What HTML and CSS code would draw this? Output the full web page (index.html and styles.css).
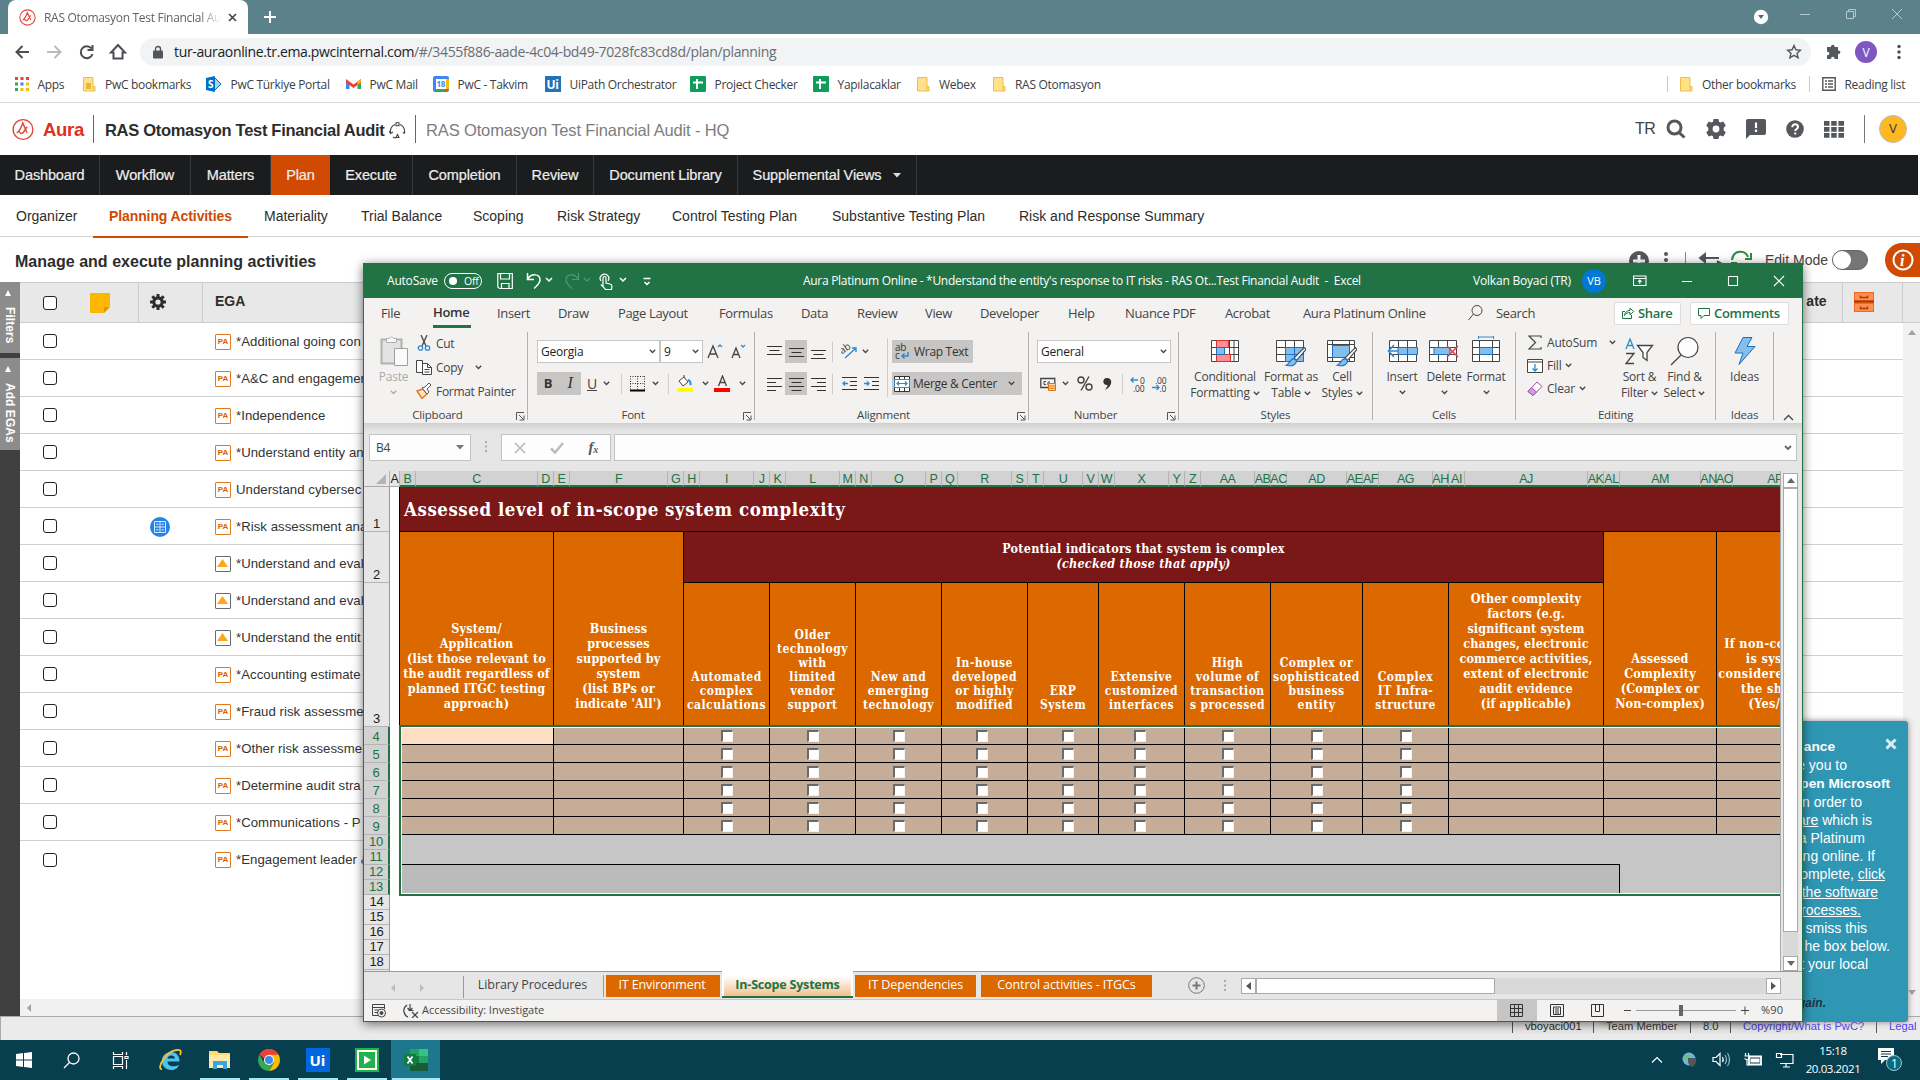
FILE: index.html
```html
<!DOCTYPE html>
<html lang="en">
<head>
<meta charset="utf-8">
<title>RAS Otomasyon Test Financial Audit</title>
<link rel="stylesheet" href="styles.css">
</head>
<body>
<svg class="defs" width="0" height="0">
  <symbol id="cv" viewBox="0 0 7 5"><path d="M.8 .8 3.5 3.5 6.2 .8" fill="none" stroke="currentColor" stroke-width="1.3"/></symbol>
  <symbol id="folder" viewBox="0 0 13 15"><path d="M.5.5h9.500v9h2v4.500H.500z" fill="#ffe18a" stroke="#e9c04b"/><path d="M10 9.500v4.500" stroke="#e9c04b"/></symbol>
  <symbol id="aura" viewBox="0 0 24 24"><circle cx="12" cy="12" r="10.800" fill="none" stroke="#e0493d" stroke-width="1.500"/><path d="M5 15.500C8 15 10 10 11.800 5l4.600 10.500M7.500 13.500c1 3.500 3.500 3.500 5 1.500l4-6" fill="none" stroke="#e0493d" stroke-width="1.600"/></symbol>
  <symbol id="sheet" viewBox="0 0 16 16"><rect width="16" height="16" rx="1" fill="#0f9d58"/><path d="M3 6.500h10M7 3v10" stroke="#fff" stroke-width="2"/></symbol>
  <symbol id="gear" viewBox="0 0 24 24"><path fill="currentColor" fill-rule="evenodd" d="M9.300 1h5.400l.6 3 1.500.9L20 3.900l2.700 4.600-2.300 2v3l2.300 2L20 20.100l-3.200-1-1.500.9-.6 3H9.300l-.6-3-1.500-.9-3.200 1-2.700-4.600 2.300-2v-3l-2.300-2L4 3.900l3.200 1 1.500-.9zM12 8.300a3.700 3.700 0 1 0 0 7.400 3.700 3.700 0 0 0 0-7.400z"/></symbol>
  <symbol id="cog" viewBox="0 0 16 16"><path d="M8 0v16M0 8h16M2.300 2.300l11.400 11.400M13.700 2.300L2.300 13.700" stroke="currentColor" stroke-width="3"/><circle cx="8" cy="8" r="4.200" fill="#e8e8e8" stroke="currentColor" stroke-width="3.200"/></symbol>
  <symbol id="launch" viewBox="0 0 9 9"><path d="M.5 8V.5H8M3 3l4.500 4.500M8 3.500V8H3.500" fill="none" stroke="#555"/></symbol>
  <symbol id="brush" viewBox="0 0 20 20"><path d="M18.500 1.500 20 3 11.500 13l-2.500-2z" fill="#fff" stroke="#444"/><path d="M8.500 11.500c2 .3 3 1.500 2.500 3.500-1.500 3-5 3.500-9 2.500 3-1 3-5 6.500-6z" fill="#83beec" stroke="#1e6fbf"/></symbol>
  <symbol id="al-c" viewBox="0 0 15 14"><path d="M0 1.500h15M2.500 5.500h10M0 9.500h15M2.500 13.500h10" stroke="#333"/></symbol>
</svg>

<div class="browser">
  <header class="tabstrip">
    <div class="tab"><svg width="17" height="17"><use href="#aura"/></svg><span>RAS Otomasyon Test Financial Au</span><svg width="9" height="9"><path d="M1 1l7 7M8 1l-7 7" stroke="#444" stroke-width="1.600"/></svg></div>
    <svg class="newtab" width="12" height="12"><path d="M6 0v12M0 6h12" stroke="#fff" stroke-width="2"/></svg>
    <svg class="winctl" width="160" height="20"><circle cx="8" cy="10" r="7.200" fill="#fff"/><path d="M5 8h6l-3 4z" fill="#49727b"/><g stroke="#b5c8cc" fill="none"><path d="M47 7.500h10M139 2l10 10M149 2l-10 10"/><path d="M93.500 4.500h7v7h-7zM95.500 4V2.500h7v7H101"/></g></svg>
  </header>
  <div class="toolbar">
    <svg class="navicons" width="120" height="22" fill="none" stroke="#4b4e52" stroke-width="2"><path d="M14 11H1.500M7.500 5l-6 6 6 6"/><path d="M32 11h13M39.500 5l6 6-6 6" stroke="#b9bbbe"/><path d="M76.500 7.500A6 6 0 1 0 77.500 13M77.500 4v5h-5"/><path d="M98.500 17.500v-6h-2.500l7-7.500 7 7.500h-2.500v6z"/></svg>
    <div class="url"><svg width="10" height="14"><path d="M2.500 6V4a2.500 2.500 0 0 1 5 0v2" fill="none" stroke="#555" stroke-width="1.400"/><rect y="5.500" width="10" height="8" rx="1" fill="#555"/></svg><span><b>tur-auraonline.tr.ema.pwcinternal.com</b>/#/3455f886-aade-4c04-bd49-7028fc83cd8d/plan/planning</span>
      <svg class="star" width="16" height="16" viewBox="0 0 16 16"><path d="M8 1.500l1.900 4.300 4.600.4-3.500 3 1.100 4.600L8 11.300l-4.100 2.500L5 9.200l-3.500-3 4.600-.4z" fill="none" stroke="#555" stroke-width="1.400"/></svg></div>
    <svg width="16" height="16" viewBox="0 0 16 16" fill="#54585c"><path d="M6 2.500a1.800 1.800 0 0 1 3.600 0V3H13v3.500h.6a1.800 1.800 0 0 1 0 3.600H13V15H9.500v-.6a1.700 1.700 0 0 0-3.400 0v.6H2v-3.700h.6a1.800 1.800 0 0 0 0-3.600H2V3h4z"/></svg>
    <span class="ava">V</span>
    <svg width="4" height="16" fill="#4b4e52"><circle cx="2" cy="2.500" r="1.700"/><circle cx="2" cy="8" r="1.700"/><circle cx="2" cy="13.500" r="1.700"/></svg>
  </div>
  <nav class="bookmarks">
    <a><svg width="14" height="14"><g fill="#ea4335"><path d="M0 0h3v3H0zM5.500 0h3v3h-3zM11 0h3v3h-3z"/></g><path fill="#34a853" d="M0 5.500h3v3H0zM0 11h3v3H0z"/><path fill="#4285f4" d="M5.500 5.500h3v3h-3z"/><path fill="#fbbc05" d="M11 5.500h3v3h-3zM5.500 11h3v3h-3zM11 11h3v3h-3z"/></svg>Apps</a>
    <a class="f"><svg width="13" height="15"><use href="#folder"/><path d="M3 6h5v6H3z" fill="#e9b93a"/></svg>PwC bookmarks</a>
    <a><svg width="16" height="16"><path d="M8 1l7 7-7 7z" fill="#a9d0ec" stroke="#0072c6"/><path d="M0 2l9-2v16l-9-2z" fill="#0072c6"/><text x="2" y="12" font-size="10" font-weight="bold" fill="#fff" font-family="Open Sans">S</text></svg>PwC Türkiye Portal</a>
    <a><svg width="15" height="16"><path d="M0 4v9h3.500V7z" fill="#4285f4"/><path d="M15 4v9h-3.500V7z" fill="#34a853"/><path d="M0 3l7.500 5.500L15 3v3.500L7.500 12 0 6.500z" fill="#ea4335"/><path d="M11.500 6L15 3.200v3L11.500 9z" fill="#fbbc05"/></svg>PwC Mail</a>
    <a><svg width="16" height="16"><rect width="16" height="16" rx="2" fill="#4285f4"/><path d="M13 3h3v10h-3z" fill="#fbbc05"/><path d="M2 13h11v3H2z" fill="#34a853"/><path d="M13 13h3l-3 3z" fill="#ea4335"/><path d="M3 3h10v10H3z" fill="#fff"/><text x="3.500" y="11" font-size="8" font-weight="bold" fill="#4285f4" font-family="Open Sans">18</text></svg>PwC - Takvim</a>
    <a><svg width="16" height="16"><path d="M0 0h16v16H0z" fill="#2273b9"/><text x="1.500" y="12.500" font-size="12" font-weight="bold" fill="#fff" font-family="Open Sans">Ui</text></svg>UiPath Orchestrator</a>
    <a><svg width="16" height="16"><use href="#sheet"/></svg>Project Checker</a>
    <a><svg width="16" height="16"><use href="#sheet"/></svg>Yapılacaklar</a>
    <a class="f"><svg width="13" height="15"><use href="#folder"/></svg>Webex</a>
    <a class="f"><svg width="13" height="15"><use href="#folder"/></svg>RAS Otomasyon</a>
    <a class="f sep"><svg width="13" height="15"><use href="#folder"/></svg>Other bookmarks</a>
    <a class="sep"><svg width="14" height="14"><path d="M.8.8h12.400v12.400H.8zM3 4h2M6 4h5M3 7h2M6 7h5M3 10h2M6 10h5" fill="none" stroke="#555" stroke-width="1.400"/></svg>Reading list</a>
  </nav>
</div>

<div class="page">
  <header class="ahead">
    <svg width="22" height="23"><use href="#aura"/></svg><span class="brand">Aura</span>
    <b class="t1">RAS Otomasyon Test Financial Audit<svg width="17" height="17" viewBox="0 0 17 17" fill="none" stroke="#444" stroke-width="1.100"><path d="M6 2.500C2.500 4 1 7 1.500 11M11 2.500c3.500 1.500 5 4.500 4.500 8.500M4 15c1 .8 2 1 3 1M7 .800h3v3H7zM7 15.500l1.500-3 1.500 3zM0 9l1.500 2.500L4 10M14 10l1.500 2"/></svg></b>
    <span class="t2">RAS Otomasyon Test Financial Audit - HQ</span>
    <div class="tools"><span>TR</span>
      <svg width="20" height="20" fill="none" stroke="#54585c" stroke-width="3"><circle cx="8.500" cy="8.500" r="6.500"/><path d="M13 13.500l5.500 5"/></svg>
      <svg class="g" width="22" height="22"><use href="#gear"/></svg>
      <svg width="20" height="20"><path d="M2 0h16q2 0 2 2v12q0 2-2 2H4l-4 4V2q0-2 2-2z" fill="#54585c"/><path d="M10 3.500v5.500M10 10.500v2.500" stroke="#fff" stroke-width="2.200"/></svg>
      <svg width="18" height="18"><circle cx="9" cy="9" r="8.800" fill="#54585c"/><path d="M6.300 7.200C6.300 3.200 12 3.600 12 7c0 2-2.800 2-2.800 4M9.200 12.500v2" fill="none" stroke="#fff" stroke-width="2"/></svg>
      <svg width="20" height="17" fill="#54585c"><path d="M0 0h5.500v4.800H0zM7.200 0h5.500v4.800H7.200zM14.400 0H20v4.800h-5.600zM0 6h5.500v4.800H0zM7.200 6h5.500v4.800H7.200zM14.400 6H20v4.800h-5.600zM0 12h5.500v4.800H0zM7.200 12h5.500v4.800H7.200zM14.400 12H20v4.800h-5.600z"/></svg>
      <i></i><b>V</b></div>
  </header>
  <nav class="mainnav"><a>Dashboard</a><a>Workflow</a><a>Matters</a><a class="on">Plan</a><a>Execute</a><a>Completion</a><a>Review</a><a>Document Library</a><a>Supplemental Views<svg width="8" height="5"><path d="M0 0h8L4 4.500z" fill="#ddd"/></svg></a></nav>
  <nav class="subnav"><a>Organizer</a><a class="on">Planning Activities</a><a>Materiality</a><a>Trial Balance</a><a>Scoping</a><a>Risk Strategy</a><a>Control Testing Plan</a><a>Substantive Testing Plan</a><a>Risk and Response Summary</a></nav>
  <div class="heading"><b>Manage and execute planning activities</b>
    <svg class="hicons" width="104" height="22"><circle cx="10" cy="12" r="10" fill="#54585c"/><path d="M10 6v12M4 12h12" stroke="#fff" stroke-width="3"/><g fill="#54585c"><circle cx="37" cy="5" r="2"/><circle cx="37" cy="11" r="2"/></g><path d="M56.500 3v18" stroke="#888"/><path d="M73 9h17M71 9l5-4v8zM88 12l5 3-5 3" fill="#54585c" stroke="#54585c" stroke-width="2"/></svg>
    <svg class="rf" width="22" height="22"><path d="M2 11C3 1 15 0 18 8M21 4v6h-6M1 14h6" fill="none" stroke="#2c8a45" stroke-width="2"/></svg>
    <span>Edit Mode</span><i class="toggle"></i>
    <i class="info"><svg width="22" height="22"><circle cx="11" cy="11" r="9.500" fill="none" stroke="#fff" stroke-width="2"/><text x="8" y="16.500" font-size="16" font-weight="bold" font-style="italic" fill="#fff" font-family="Liberation Serif">i</text></svg></i></div>
  <div class="work">
    <aside><span class="vt v1"><i></i>Filters</span><span class="vt v2"><i></i>Add EGAs</span></aside>
    <div class="list">
      <div class="lh"><i class="ck"></i><svg class="note" width="20" height="20"><path d="M0 1q0-1 1-1h18q1 0 1 1v12l-6 7H1q-1 0-1-1z" fill="#ffb600"/><path d="M14 20v-5q0-1 1-1h5z" fill="#dd9a00"/></svg><span class="gc"><svg width="16" height="16"><use href="#cog"/></svg></span><b>EGA</b><span class="fill"></span><b class="ate">ate</b><span class="cab"><svg width="20" height="20"><path d="M0 0h20v20H0z" fill="#f26a21"/><path d="M0 9.500h20" stroke="#a63c00" stroke-width="2"/><path d="M1 1h18v7H1zM1 12h18v7H1z" fill="#ff8f50"/><path d="M6.500 3.500v2h7v-2M6.500 14.500v2h7v-2" fill="none" stroke="#a63c00" stroke-width="1.500"/></svg></span></div>
      <div class="body">
        <div class="lr"><i class="ck"></i><em>PA</em>*Additional going con</div>
        <div class="lr"><i class="ck"></i><em>PA</em>*A&amp;C and engagemen</div>
        <div class="lr"><i class="ck"></i><em>PA</em>*Independence</div>
        <div class="lr"><i class="ck"></i><em>PA</em>*Understand entity an</div>
        <div class="lr"><i class="ck"></i><em>PA</em>Understand cybersec</div>
        <div class="lr"><i class="ck"></i><svg class="calc" width="20" height="20"><circle cx="10" cy="10" r="10" fill="#2684e8"/><path d="M4.500 4.500h11v11h-11zM10 4.500v11M4.500 10h11M6 7.200h2.500M11.500 7.200H14M6 12.800h2.500M11.500 12.800H14" fill="none" stroke="#d8e9fb"/></svg><em>PA</em>*Risk assessment ana</div>
        <div class="lr"><i class="ck"></i><em class="w"></em>*Understand and eval</div>
        <div class="lr"><i class="ck"></i><em class="w"></em>*Understand and eval</div>
        <div class="lr"><i class="ck"></i><em class="w"></em>*Understand the entit</div>
        <div class="lr"><i class="ck"></i><em>PA</em>*Accounting estimate</div>
        <div class="lr"><i class="ck"></i><em>PA</em>*Fraud risk assessme</div>
        <div class="lr"><i class="ck"></i><em>PA</em>*Other risk assessme</div>
        <div class="lr"><i class="ck"></i><em>PA</em>*Determine audit stra</div>
        <div class="lr"><i class="ck"></i><em>PA</em>*Communications - P</div>
        <div class="lr last"><i class="ck"></i><em>PA</em>*Engagement leader &amp;</div>
      </div>
      <div class="hs"><svg width="6" height="8"><path d="M5 0v8L1 4z" fill="#a0a0a0"/></svg></div>
    </div>
    <div class="vs"><svg width="8" height="5"><path d="M0 5h8L4 0z" fill="#a0a0a0"/></svg><svg width="8" height="5"><path d="M0 0h8L4 5z" fill="#a0a0a0"/></svg></div>
  </div>
  <footer class="foot"><span>vboyaci001</span><span>Team Member</span><span>8.0</span><span class="l">Copyright/What is PwC?</span><span class="l">Legal</span></footer>
</div>

<div class="toast"><svg width="12" height="12"><path d="M1.500 1.500l9 9M10.500 1.500l-9 9" stroke="#d6edf4" stroke-width="3"/></svg>
<p><b>ance</b></p><p>e you to</p><p><b>pen Microsoft</b></p><p>n order to</p><p><u>are</u> which is</p><p>a Platinum</p><p>ng online. If</p><p>omplete, <u>click</u></p><p><u>the software</u></p><p><u>rocesses.</u></p><p>smiss this</p><p>he box below.</p><p>t your local</p><p class="k"><b>gain.</b></p></div>

<div class="excel">
  <div class="xtitle">
    <span class="as">AutoSave</span><span class="sw"><i></i>Off</span>
    <svg class="qa" width="160" height="22" fill="none" stroke="#fff" stroke-width="1.200"><path d="M.800 3.500h14.500v15H2.500L.800 17zM3.500 3.500v5.500h9V3.500M4.500 18.500v-5h7.500v5"/><path d="M30.500 3v6.500H37M30.500 9.500C34 3 43 3.500 43 10c0 3-2 5-6 8.500" stroke-width="1.500"/><path d="M49 8l3 3 3-3M123 8l3 3 3-3M146.500 8.500h7M147.500 12l2.500 2.500 2.500-2.500" stroke-width="1.500"/><g stroke="#4f9a70"><path d="M81.500 3v6.500H75M81.500 9.500C78 3 69 3.500 69 10c0 3 2 5 6 8.500"/><path d="M87 8l3 3 3-3"/></g><path d="M106 17v-9q0-1.500 1.500-1.500T109 8v5l4 1q2 .5 2 2.500l-.500 3h-6l-4.500-5M104 11a4.300 4.300 0 1 1 7 0"/></svg>
    <span class="name">Aura Platinum Online - *Understand the entity's response to IT risks - RAS Ot...Test Financial Audit&nbsp; -&nbsp; Excel</span>
    <span class="user">Volkan Boyaci (TR)</span><span class="vb">VB</span>
    <svg class="wc" width="152" height="14" fill="none" stroke="#fff" stroke-width="1.100"><path d="M.500 2h12.500v9.500H.500zM.500 4.500H13M6.800 10V6M5 7.800L6.800 6l1.800 1.800M49 7.500h10M95.500 2.500h9v9h-9zM141 2l10 10M151 2l-10 10"/></svg>
  </div>
  <div class="xtabs"><a>File</a><a class="on">Home</a><a>Insert</a><a>Draw</a><a>Page Layout</a><a>Formulas</a><a>Data</a><a>Review</a><a>View</a><a>Developer</a><a>Help</a><a>Nuance PDF</a><a>Acrobat</a><a>Aura Platinum Online</a><svg width="15" height="16"><circle cx="9" cy="5.500" r="5" fill="none" stroke="#444"/><path d="M5.500 9L.500 15" stroke="#444"/></svg><a>Search</a>
    <span class="bt sh"><svg width="12" height="12" fill="none" stroke="#217346"><path d="M3 4.500H.500v7h9V8M2.500 8.500C3 5 5 3.500 8 3.500V1l3.500 3.500L8 8V5.500C6 5.500 4 6 2.500 8.500z"/></svg>Share</span><span class="bt co"><svg width="12" height="12" fill="none" stroke="#217346"><path d="M.500 1.500h11v7H6l-3 3v-3H.500z"/></svg>Comments</span></div>
  <div class="ribbon">
    <section class="g1"><div class="in">
      <div class="big dis"><svg width="28" height="31"><path d="M1.500 3.500h20v24h-20z" fill="#e3e3e3" stroke="#b0b0b0" stroke-width="2"/><path d="M6.500 2.500h3Q11.500-1 13.500 2.500h3v4h-10z" fill="#fafafa" stroke="#b0b0b0"/><path d="M14.500 12.500h13v17h-13z" fill="#fafafa" stroke="#a0a0a0"/></svg><span>Paste</span><svg class="cv"><use href="#cv"/></svg></div>
      <div class="st"><div><svg width="16" height="16" fill="none" stroke="#444" stroke-width="1.300"><path d="M5 0l5 11M11 0L6 11"/><circle cx="4.500" cy="13" r="2.200" stroke="#2e8bd0"/><circle cx="11.500" cy="13" r="2.200" stroke="#2e8bd0"/></svg>Cut</div><div><svg width="16" height="16" fill="#fff" stroke="#444"><path d="M.500 1.500h6v12h-6zM6.500 4.500h5l4 4v7h-9zM11.500 4.500v4h4M8.500 10.500h5M8.500 13h5"/></svg>Copy<svg class="cv m9"><use href="#cv"/></svg></div><div><svg width="16" height="16"><path d="M1 8l6-2 4 5-5 4.500z" fill="#fde3c7" stroke="#e87a13" stroke-width="1.500"/><path d="M6 5l5 6 2-2-2-3 4-4-2-2-4 4z" fill="#fff" stroke="#555"/></svg>Format Painter</div></div>
    </div><h6>Clipboard<svg width="9" height="9"><use href="#launch"/></svg></h6></section>
    <section class="g2"><div class="in col">
      <div class="fr1"><span class="cb">Georgia<svg class="cv"><use href="#cv"/></svg></span><span class="cb">9<svg class="cv"><use href="#cv"/></svg></span><svg width="17" height="18" fill="none" stroke="#444" stroke-width="1.300"><path d="M1 15L6 3l5 12M2.800 11h6.400"/><path d="M11 4l2-2 2 2" stroke="#2e8bd0"/></svg><svg width="17" height="18" fill="none" stroke="#444" stroke-width="1.300"><path d="M1 15L5 5l4 10M2.500 11.500h5"/><path d="M10 2l2 2 2-2" stroke="#2e8bd0"/></svg></div>
      <div class="fr2"><b class="hi">B</b><i class="hi sr">I</i><u>U</u><svg class="cv"><use href="#cv"/></svg><s></s><svg width="15" height="16"><path d="M.500 0v14M7.500 0v14M14.500 0v14M0 .500h15M0 7.500h15" stroke="#333" stroke-dasharray="1 1.500"/><path d="M0 14.500h15" stroke="#000" stroke-width="2"/></svg><svg class="cv"><use href="#cv"/></svg><s></s><svg width="17" height="17"><path d="M3 6l5-4 4 5-5 4zM8 2V0" fill="#fff" stroke="#444"/><path d="M12 5q3 1 2.500 5" fill="none" stroke="#2e8bd0" stroke-width="2"/><path d="M1 13h16v4H1z" fill="#ff0"/></svg><svg class="cv"><use href="#cv"/></svg><svg width="17" height="17"><path d="M4.500 11L8.500 1l4 10M6 7.500h5" fill="none" stroke="#444" stroke-width="1.300"/><path d="M0 13h16v4H0z" fill="red"/></svg><svg class="cv"><use href="#cv"/></svg></div>
    </div><h6>Font<svg width="9" height="9"><use href="#launch"/></svg></h6></section>
    <section class="g3"><div class="in">
      <div class="al">
        <span><svg width="15" height="14"><path d="M0 1.500h15M2.500 5.500h10M0 9.500h15" stroke="#333"/></svg></span><span class="hi"><svg width="15" height="14"><path d="M0 3.500h15M2.500 7.500h10M0 11.500h15" stroke="#333"/></svg></span><span><svg width="15" height="14"><path d="M0 5.500h15M2.500 9.500h10M0 13.500h15" stroke="#333"/></svg></span><s></s><span><svg width="17" height="17" fill="none"><path d="M4 15L15 5M15 9V5h-4" stroke="#2e8bd0" stroke-width="1.400"/><text x="0" y="8" font-size="10" font-family="Open Sans" fill="#333" transform="rotate(-35 6 8)">ab</text></svg></span><span class="oc"><svg class="cv"><use href="#cv"/></svg></span>
        <span><svg width="15" height="14"><path d="M0 1.500h15M0 5.500h9M0 9.500h15M0 13.500h9" stroke="#333"/></svg></span><span class="hi"><svg width="15" height="14"><use href="#al-c"/></svg></span><span><svg width="15" height="14"><path d="M0 1.500h15M6 5.500h9M0 9.500h15M6 13.500h9" stroke="#333"/></svg></span><s></s><span><svg width="15" height="13"><path d="M0 .500h15M8 4.500h7M8 8.500h7M0 12.500h15" stroke="#333"/><path d="M6 6.500H1M3 4.500l-2 2 2 2" fill="none" stroke="#2e8bd0" stroke-width="1.300"/></svg></span><span><svg width="15" height="13"><path d="M0 .500h15M8 4.500h7M8 8.500h7M0 12.500h15" stroke="#333"/><path d="M0 6.500h5M3 4.500l2 2-2 2" fill="none" stroke="#2e8bd0" stroke-width="1.300"/></svg></span>
      </div>
      <div class="wm"><span class="hi w"><svg width="16" height="18"><text x="0" y="8" font-size="10" font-family="Open Sans" fill="#333">ab</text><text x="0" y="16" font-size="10" font-family="Open Sans" fill="#333">c</text><path d="M13 9v4H7M9.500 10.500L7 13l2.500 2.500" fill="none" stroke="#2e8bd0" stroke-width="1.500"/></svg>Wrap Text</span><span class="hi mc"><svg width="16" height="16"><path d="M.500.500h15v15H.500zM5.500.500v15M10.500.500v15" fill="#fff" stroke="#333"/><path d="M.500 3.500h15v8H.500z" fill="#fff" stroke="#2e8bd0"/><path d="M3 7.500h10M5 5.500l-2 2 2 2M11 5.500l2 2-2 2" fill="none" stroke="#2e8bd0" stroke-width="1.200"/></svg>Merge &amp; Center<svg class="cv"><use href="#cv"/></svg></span></div>
    </div><h6>Alignment<svg width="9" height="9"><use href="#launch"/></svg></h6></section>
    <section class="g4"><div class="in col">
      <span class="cb">General<svg class="cv"><use href="#cv"/></svg></span>
      <div class="nr2"><svg width="17" height="16"><path d="M.800 2.500h14v9H.800z" fill="none" stroke="#444" stroke-width="1.300"/><path d="M6 5.500H4v3h2M8 9V6h2" fill="none" stroke="#444"/><path d="M8.500 7.500h7v7h-7zM8.500 10h7M8.500 12.300h7" fill="#fbd9b0" stroke="#e0700c"/></svg><svg class="cv"><use href="#cv"/></svg><svg width="16" height="15" fill="none" stroke="#444" stroke-width="1.400"><circle cx="4" cy="4" r="3"/><circle cx="12" cy="11" r="3"/><path d="M12 .500L4 14.500"/></svg><svg width="9" height="12"><path d="M4 0c6 0 6 8-2 12 2-3 2.500-4 2.500-5C-1 7.500-1 0 4 0z" fill="#333"/></svg><s></s><svg class="de" width="16" height="16"><text x="10" y="7.500">0</text><text x="3" y="15.500">.00</text><path d="M8 4H1M3.500 1.500L1 4l2.500 2.500" fill="none" stroke="#2e8bd0" stroke-width="1.300"/></svg><svg class="de" width="16" height="16"><text x="3" y="7.500">.00</text><text x="7.500" y="15.500">.0</text><path d="M0 11.500h7M4.500 9L7 11.500 4.500 14" fill="none" stroke="#2e8bd0" stroke-width="1.300"/></svg></div>
    </div><h6>Number<svg width="9" height="9"><use href="#launch"/></svg></h6></section>
    <section class="g5"><div class="in bigs">
      <div class="big"><svg width="28" height="31"><path d="M.500 4.500h27v21H.500zM.500 11.500h27M.500 18.500h27M5.500 4.500v21M18.500 4.500v21M23 4.500v21" fill="#fff" stroke="#444"/><path d="M5.500 4.500h12v7h-12zM5.500 18.500h14v7h-14z" fill="#ff8d92" stroke="#d6342f"/><path d="M5.500 11.500h8v7h-8z" fill="#83beec" stroke="#1e6fbf"/></svg><span>Conditional</span><span>Formatting <svg class="cv"><use href="#cv"/></svg></span></div>
      <div class="big"><svg width="31" height="31"><path d="M.500 4.500h27v21H.500zM.500 11.500h27M.500 18.500h27M9.500 4.500v21M18.500 4.500v21" fill="#fff" stroke="#444"/><path d="M9.500 11.500h18v14h-18zM9.500 18.500h18M18.500 11.500v14" fill="#83beec" stroke="#1e6fbf"/><use href="#brush" x="8" y="10" width="22" height="22"/></svg><span>Format as</span><span>Table <svg class="cv"><use href="#cv"/></svg></span></div>
      <div class="big"><svg width="31" height="31"><path d="M.500 4.500h27v21H.500zM.500 8.500h27M.500 21.500h27M5.500 4.500v21M22.500 4.500v21" fill="#fff" stroke="#444"/><path d="M5.500 9.500h17v12h-17z" fill="#83beec" stroke="#1e6fbf"/><use href="#brush" x="8" y="10" width="22" height="22"/></svg><span>Cell</span><span>Styles <svg class="cv"><use href="#cv"/></svg></span></div>
    </div><h6>Styles</h6></section>
    <section class="g6"><div class="in bigs">
      <div class="big"><svg width="31" height="31"><path d="M2.500 4.500h27v21h-27zM2.500 11.500h27M2.500 18.500h27M11.500 4.500v21M20.500 4.500v21" fill="#fff" stroke="#444"/><path d="M11 11.500h19.500v7H11zM20.500 11.500v7" fill="#83beec" stroke="#1e6fbf"/><path d="M7 9l-5.500 6L7 21M2 15h9" fill="none" stroke="#2e8bd0" stroke-width="1.600"/></svg><span>Insert</span><svg class="cv"><use href="#cv"/></svg></div>
      <div class="big"><svg width="31" height="31"><path d="M.500 4.500h27v21H.500zM.500 11.500h27M.500 18.500h27M9.500 4.500v21M18.500 4.500v21" fill="#fff" stroke="#444"/><path d="M5 11.500h16v7H5z" fill="#83beec" stroke="#1e6fbf"/><path d="M18 10l11 11M29 10L18 21" stroke="#e8403c" stroke-width="1.500"/></svg><span>Delete</span><svg class="cv"><use href="#cv"/></svg></div>
      <div class="big"><svg width="28" height="31"><path d="M.500 4.500h27v21H.500zM.500 11.500h27M.500 18.500h27M7.500 4.500v21M20.500 4.500v21" fill="#fff" stroke="#444"/><path d="M7.500 11.500h13v7h-13z" fill="#83beec" stroke="#1e6fbf"/><path d="M6.500 1h15M6.500 0v3M21.500 0v3" stroke="#2e8bd0"/></svg><span>Format</span><svg class="cv"><use href="#cv"/></svg></div>
    </div><h6>Cells</h6></section>
    <section class="g7"><div class="in bigs">
      <div class="st"><div><svg width="16" height="15"><path d="M14 3V1H2l6.500 6.500L2 14h12v-2" fill="none" stroke="#444" stroke-width="1.200"/></svg>AutoSum<svg class="cv m9"><use href="#cv"/></svg></div><div><svg width="16" height="14"><path d="M.500.500h15v13H.500zM.500 3h15" fill="#fff" stroke="#444"/><path d="M8 5v7M5.500 9.500L8 12l2.500-2.500" fill="none" stroke="#2e8bd0" stroke-width="1.300"/></svg>Fill<svg class="cv"><use href="#cv"/></svg></div><div><svg width="16" height="15"><path d="M1 10.500l9-9.500 5 4.500-9 9z" fill="#fff" stroke="#9b4fae"/><path d="M1 10.500l3.500-4 5 4.500L6 14.500z" fill="#d59be0" stroke="#9b4fae"/></svg>Clear<svg class="cv"><use href="#cv"/></svg></div></div>
      <div class="big"><svg width="29" height="31" fill="none" stroke-width="1.300"><path d="M1 13L5 3l4 10M2.500 9.500h5" stroke="#2e8bd0"/><path d="M1 17.500h8l-8 10h8" stroke="#444"/><path d="M12.500 9.500h15l-5.500 7v8l-4-3v-5z" fill="#fff" stroke="#444"/></svg><span>Sort &amp;</span><span>Filter <svg class="cv"><use href="#cv"/></svg></span></div>
      <div class="big"><svg width="29" height="31" fill="#fdfdfd" stroke="#444" stroke-width="1.200"><path d="M11 19L1 29"/><circle cx="18" cy="11.500" r="10"/></svg><span>Find &amp;</span><span>Select <svg class="cv"><use href="#cv"/></svg></span></div>
    </div><h6>Editing</h6></section>
    <section class="g8"><div class="in bigs"><div class="big"><svg width="22" height="31"><path d="M9 1.500h9l-5 9h8L5 28.500l4-11.500H1z" fill="#83beec" stroke="#1e6fbf"/></svg><span>Ideas</span></div></div><h6>Ideas</h6></section>
    <svg class="up" width="11" height="7"><path d="M1 6l4.500-4.500L10 6" fill="none" stroke="#444" stroke-width="1.300"/></svg>
  </div>
  <div class="fbar"><span class="nb">B4<svg width="8" height="5"><path d="M0 0h8L4 4.500z" fill="#777"/></svg></span><svg class="dots" width="3" height="12" fill="#aaa"><path d="M0 0h2v2H0zM0 4.500h2v2H0zM0 9h2v2H0z"/></svg><span class="fx"><svg width="12" height="12"><path d="M1 1l10 10M11 1L1 11" stroke="#bbb" stroke-width="1.700"/></svg><svg width="14" height="12"><path d="M1 6.500l4 4L13 1" fill="none" stroke="#bbb" stroke-width="2.500"/></svg><i>f<sub>x</sub></i></span><span class="fi"><svg width="8" height="6"><path d="M1 1l3 3 3-3" fill="none" stroke="#666" stroke-width="1.800"/></svg></span></div>
  <div class="gridwrap">
    <div class="sheet">
      <div class="cols"><i class="corner"></i><i class="a">A</i><i>B</i><i>C</i><i>D</i><i>E</i><i>F</i><i>G</i><i>H</i><i>I</i><i>J</i><i>K</i><i>L</i><i>M</i><i>N</i><i>O</i><i>P</i><i>Q</i><i>R</i><i>S</i><i>T</i><i>U</i><i>V</i><i>W</i><i>X</i><i>Y</i><i>Z</i><i>AA</i><i>AB</i><i>AC</i><i>AD</i><i>AE</i><i>AF</i><i>AG</i><i>AH</i><i>AI</i><i>AJ</i><i>AK</i><i>AL</i><i>AM</i><i>AN</i><i>AO</i><i class="ap">AP</i></div>
      <div class="below">
        <div class="rows"><i>1</i><i>2</i><i>3</i><i class="s">4</i><i class="s">5</i><i class="s">6</i><i class="s">7</i><i class="s">8</i><i class="s">9</i><i class="s">10</i><i class="s">11</i><i class="s">12</i><i class="s">13</i><i>14</i><i>15</i><i>16</i><i>17</i><i>18</i><i></i></div>
        <div class="cells">
          <div class="title">Assessed level of in-scope system complexity</div>
          <div class="hd">
            <div class="o r2">System/<br>Application<br>(list those relevant to<br>the audit regardless of<br>planned ITGC testing<br>approach)</div>
            <div class="o r2">Business<br>processes<br>supported by<br>system<br>(list BPs or<br>indicate 'All')</div>
            <div class="pot"><span>Potential indicators that system is complex</span><em>(checked those that apply)</em></div>
            <div class="o r2 am">Assessed<br>Complexity<br>(Complex or<br>Non-complex)</div>
            <div class="o r2 ao"><span>If non-complex,<br>is system<br>considered under<br>the shared<br>(Yes/No)</span></div>
            <div class="o n">Automated<br>complex<br>calculations</div><div class="o n">Older<br>technology<br>with<br>limited<br>vendor<br>support</div><div class="o n">New and<br>emerging<br>technology</div><div class="o n">In-house<br>developed<br>or highly<br>modified</div><div class="o n">ERP<br>System</div><div class="o n">Extensive<br>customized<br>interfaces</div><div class="o n">High<br>volume of<br>transaction<br>s processed</div><div class="o n">Complex or<br>sophisticated<br>business<br>entity</div><div class="o n">Complex<br>IT Infra-<br>structure</div><div class="o">Other complexity<br>factors (e.g.<br>significant system<br>changes, electronic<br>commerce activities,<br>extent of electronic<br>audit evidence<br>(if applicable)</div>
          </div>
          <div class="dr"><i class="act"></i><i></i><i></i><i></i><i></i><i></i><i></i><i></i><i></i><i></i><i></i><i></i><i></i><i></i></div>
          <div class="dr"><i></i><i></i><i></i><i></i><i></i><i></i><i></i><i></i><i></i><i></i><i></i><i></i><i></i><i></i></div>
          <div class="dr"><i></i><i></i><i></i><i></i><i></i><i></i><i></i><i></i><i></i><i></i><i></i><i></i><i></i><i></i></div>
          <div class="dr"><i></i><i></i><i></i><i></i><i></i><i></i><i></i><i></i><i></i><i></i><i></i><i></i><i></i><i></i></div>
          <div class="dr"><i></i><i></i><i></i><i></i><i></i><i></i><i></i><i></i><i></i><i></i><i></i><i></i><i></i><i></i></div>
          <div class="dr"><i></i><i></i><i></i><i></i><i></i><i></i><i></i><i></i><i></i><i></i><i></i><i></i><i></i><i></i></div>
          <div class="gr"><div></div></div>
          <div class="sel"></div>
        </div>
      </div>
    </div>
    <div class="xvs"><b><svg width="8" height="5"><path d="M0 5h8L4 0z" fill="#666"/></svg></b><u></u><em></em><b><svg width="8" height="5"><path d="M0 0h8L4 5z" fill="#666"/></svg></b></div>
  </div>
  <div class="stabs"><span class="ar"><svg width="34" height="8" fill="#bbb"><path d="M4 0v8L0 4zM29 0v8l4-4z"/></svg></span><a class="lp">Library Procedures</a><a class="or e1">IT Environment</a><a class="cur"><b>In-Scope Systems</b></a><a class="or e2">IT Dependencies</a><a class="or e3">Control activities - ITGCs</a>
    <svg class="plus" width="17" height="17" fill="none" stroke="#777"><circle cx="8.500" cy="8.500" r="7.800"/><path d="M8.500 4.500v8M4.500 8.500h8" stroke-width="2"/></svg><svg class="d2" width="2" height="12" fill="#aaa"><path d="M0 0h2v2H0zM0 4.500h2v2H0zM0 9h2v2H0z"/></svg>
    <div class="xhs"><b><svg width="5" height="8"><path d="M5 0v8L0 4z" fill="#555"/></svg></b><u></u><em></em><b><svg width="5" height="8"><path d="M0 0v8l5-4z" fill="#555"/></svg></b></div></div>
  <div class="status"><svg width="14" height="14" fill="none" stroke="#444"><path d="M6 11.500H.500V.500h12V5M.500 3.500h12M2.500 6h4M2.500 8.500h3"/><circle cx="9.500" cy="9" r="4"/><circle cx="9.500" cy="9" r="1.500" fill="#444"/></svg><svg width="16" height="14" fill="none" stroke="#444" stroke-width="1.200"><path d="M4 1Q0 4 1 8t4 5M7 0v6M4.500 4L7 6.500 9.500 4M5.500 6.500h5M9 8l6 6M15 8l-6 6"/></svg><span>Accessibility: Investigate</span>
    <svg class="views" width="310" height="21"><path d="M0 0h40v21H0z" fill="#c8c6c4"/><g fill="none" stroke="#333"><path d="M13.500 4.500h12v12h-12zM13.500 8.500h12M13.500 12.500h12M17.500 4.500v12M21.500 4.500v12"/><path d="M53.500 4.500h13v12h-13zM56.500 7h7v7.500h-7zM58 9h4M58 11h4M58 13h4M94.500 4.500h12v12h-12zM98.500 4.500v7h4v-7"/></g><path d="M127 10.500h7M244 10.500h8M248 6.500v8" stroke="#444"/><path d="M139 10.500h100" stroke="#999"/><path d="M182 5h4v11h-4z" fill="#666"/><text x="264" y="14" font-size="11" fill="#444" font-family="Open Sans" textLength="22">%90</text></svg></div>
</div>

<div class="taskbar">
  <span><svg width="16" height="16" fill="#fff"><path d="M0 2l7-1v6.500H0zM8 .900L16 0v7.500H8zM0 8.500h7V15l-7-1zM8 8.500h8V16l-8-1z"/></svg></span>
  <span><svg width="18" height="17" fill="none" stroke="#fff" stroke-width="1.300"><circle cx="10.500" cy="6.500" r="5.500"/><path d="M6.500 10.500L1 16"/></svg></span>
  <span><svg width="17" height="17" fill="none" stroke="#fff" stroke-width="1.200"><path d="M1.500 4.500h9v8h-9zM1.500 0v2.500h9V0M1.500 17v-2.500h9V17M14.500 0v3M14.500 8v9M13 4.500h3v2h-3z"/></svg></span>
  <span><svg width="24" height="24"><path d="M20.500 13.500h-12c0 5 6.500 6 11.500 3.500-1 3-4 5-8 5-5 0-9-3.500-9-9s4-9 9-9c6 0 8.500 4.500 8.500 9.500zM8.500 10.500h7.500c0-4-7-4-7.500 0z" fill="#4cc3f1"/><path d="M3 21C-3 22 6 3 18 2c5-.5 4 3 3 5" fill="none" stroke="#f4c430" stroke-width="1.800"/></svg></span>
  <span class="run"><svg width="22" height="20"><path d="M0 1h8l2 2h11v15H0z" fill="#ffd970"/><path d="M0 5h21v13H0z" fill="#ffe9a6"/><path d="M4 11h14v8h-4v-4H8v4H4z" fill="#37a6e6"/></svg></span>
  <span class="run"><svg width="22" height="22" viewBox="0 0 22 22"><path d="M11 11L1.500 5.500A11 11 0 0 1 20.500 5.500z" fill="#ea4335"/><path d="M11 11V5.500h9.500A11 11 0 0 1 11 22l5-8.500z" fill="#fbbc05"/><path d="M11 11l4.800 2.800L11 22A11 11 0 0 1 1.500 5.500L6.200 13.500z" fill="#34a853"/><path d="M1.500 5.500A11 11 0 0 1 20.500 5.500H11a5.500 5.500 0 0 0-5 4z" fill="#ea4335"/><circle cx="11" cy="11" r="5" fill="#fff"/><circle cx="11" cy="11" r="4" fill="#4285f4"/></svg></span>
  <span class="run"><svg width="24" height="24"><path d="M0 0h24v24H0z" fill="#0067df"/><text x="3.500" y="17.500" font-size="15" font-weight="bold" fill="#fff" font-family="Open Sans">Ui</text></svg></span>
  <span class="run"><svg width="24" height="24"><path d="M0 0h24v24H0z" fill="#22b24c"/><path d="M3 3h18v18H3z" fill="none" stroke="#fff" stroke-width="2"/><path d="M9 7.500l7 4.500-7 4.500z" fill="#fff"/></svg></span>
  <span class="run on"><svg width="24" height="22"><path d="M6 0h9v7H6z" fill="#21a366"/><path d="M15 0h9v7h-9z" fill="#33c481"/><path d="M6 7h9v7H6z" fill="#107c41"/><path d="M15 7h9v7h-9z" fill="#21a366"/><path d="M6 14h18v8H6z" fill="#185c37"/><path d="M0 5h12v12H0z" fill="#107c41"/><path d="M3.500 7.500l5 7M8.500 7.500l-5 7" stroke="#fff" stroke-width="1.800"/></svg></span>
  <svg class="tray" width="145" height="24" fill="none" stroke="#fff" stroke-width="1.200"><path d="M2 14.500l5-5 5 5"/><circle cx="39" cy="11" r="6.500" fill="#6fb7d8" stroke="none"/><path d="M34 8q3-3 5-1t-3 5z" fill="#6fbf73" stroke="none"/><path d="M38 10h8v4q-1 4-4 5-3-1-4-5z" fill="#555" stroke="none"/><path d="M63 9.500h3l4-4v12l-4-4h-3zM72.500 9q1.500 2.500 0 5"/><path d="M75 7q3 4.500 0 9M77.500 5q4 6.500 0 13" stroke="#8fb0b8"/><path d="M99 8.500h12v8H99z" stroke-width="1.800"/><path d="M101 11h8v3h-8z" fill="#fff"/><path d="M95.500 5v3M98.500 5v3M94.500 8h5v2.500q-2.500 2-5 0M97 12v5h2"/><path d="M130 6.500h13v9h-13M136 15.500V19M133 19h7M126.500 5.500h5v4h-5z"/></svg>
  <div class="clock">15:18<br>20.03.2021</div>
  <svg class="notif" width="26" height="32"><path d="M0 4h16v12h-9l-4 4v-4H0z" fill="#fff"/><path d="M3 7.500h10M3 10h10M3 12.500h7" stroke="#073f4e"/><circle cx="16" cy="19" r="7.500" fill="#0a6b80" stroke="#9cc6cf"/><text x="13" y="23.500" font-size="12" fill="#fff" font-family="Open Sans">1</text></svg>
</div>
</body>
</html>
```
FILE: styles.css
```css
*,*::before,*::after{box-sizing:border-box}
body{margin:0;width:1920px;height:1080px;overflow:hidden;background:#fff;position:relative;font-family:"Liberation Sans",Arial,sans-serif;color:#2d2d2d;white-space:nowrap}
svg{display:block;flex:none}
i{font-style:normal}
.defs{position:absolute}
/* browser frame */
.browser{font-family:"Open Sans",sans-serif;font-size:12px;letter-spacing:-.25px;color:#3c4043}
.tabstrip{height:34px;background:#5b828b;display:flex;align-items:center}
.tab{margin-left:8px;width:240px;height:34px;background:#fff;border-radius:8px 8px 0 0;display:flex;align-items:center;padding-left:11px;color:#5f6368}
.tab span{margin-left:8px;width:177px;overflow:hidden;margin-right:7px;letter-spacing:-.3px;-webkit-mask-image:linear-gradient(90deg,#000 88%,transparent)}
.newtab{margin-left:16px}
.winctl{margin-left:auto;margin-right:7px}
.toolbar{height:36px;display:flex;align-items:center;padding-left:15px}
.navicons{width:125px}
.url{width:1671px;height:28px;border-radius:14px;background:#f1f3f4;display:flex;align-items:center;padding-left:13px;font-size:14px;color:#6a6e72;letter-spacing:-.35px}
.url span{margin-left:11px;padding-bottom:1px}
.url b{font-weight:400;color:#202124}
.star{margin-left:auto;margin-right:9px}
.toolbar>svg:nth-of-type(2){margin-left:14px}
.ava{width:22px;height:22px;border-radius:50%;background:#7e57c2;color:#fff;display:flex;align-items:center;justify-content:center;margin:0 20px 0 14px;font-size:12px}
.bookmarks{height:33px;border-bottom:1px solid #d8d8d8;display:grid;align-items:center;grid-template-columns:68px 123px 140px 87px 112px 145px 123px 104px 76px 674px 142px 120px;padding:0 0 4px 15px}
.bookmarks a{display:flex;align-items:center;gap:8.500px;letter-spacing:-.3px}
.bookmarks .f{gap:9px}
.bookmarks .sep{border-left:1px solid #ccc;padding-left:12px;height:16px}
/* application page */
.ahead{height:52px;display:flex;align-items:center;padding-left:12px}
.ahead .brand{margin-left:9px;width:50px;font-weight:700;font-size:18.500px;color:#e0301e;letter-spacing:-.3px;padding-top:2px}
.t1{height:28px;border-left:1px solid #666;border-right:1px solid #666;width:323px;padding-left:11px;display:flex;align-items:center;font-size:16.500px;gap:4px;letter-spacing:-.3px;padding-top:2px}
.t2{color:#7d7d7d;font-size:16.500px;padding:2px 0 0 10px;letter-spacing:-.14px}
.tools{margin-left:auto;display:flex;align-items:center;color:#54585c;margin-right:13px}
.tools span{font-size:16px;width:31px;letter-spacing:-.5px;color:#444}
.tools svg{margin-right:20px}
.tools .g{margin-right:19px;margin-left:-1px}
.tools i{width:1px;height:28px;background:#777;margin:0 14px 0 0}
.tools b{width:28px;height:28px;border-radius:50%;background:#ffb920;border:1px solid #bbb;font-weight:400;font-size:12px;display:flex;align-items:center;justify-content:center;color:#333}
.mainnav{height:40px;background:#1b1c1d;display:grid;grid-template-columns:100px 91px 80px 59px 83px 104px 77px 144px 179px;margin-right:2px}
.mainnav a{color:#eee;font-size:14.500px;display:flex;align-items:center;justify-content:center;border-right:1px solid #383838;letter-spacing:-.13px;-webkit-text-stroke:.2px #eee}
.mainnav svg{margin-left:12px}
.mainnav .on{background:#d04a02;border:0}
.subnav{height:42px;border-bottom:1px solid #d2d2d2;display:grid;grid-template-columns:93px 155px 97px 112px 84px 115px 160px 187px 220px;font-size:14px}
.subnav a{display:flex;align-items:center;padding:0 0 1px 16px}
.subnav .on{color:#d04a02;font-weight:700;border-bottom:2px solid #d04a02;height:43px;letter-spacing:-.1px;padding-bottom:0}
.heading{height:45px;display:flex;align-items:center;padding-left:15px}
.heading>b{font-size:16px;width:1614px;padding-top:5px;letter-spacing:.02px}
.rf{margin-left:-3px}
.heading span{font-size:14px;margin-left:13px;color:#444;width:67px}
.toggle{width:36px;height:20px;border-radius:10px;background:#757575;border:1px solid #666}
.toggle::before{content:"";display:block;width:18px;height:18px;border-radius:50%;background:#fff}
.info{margin-left:auto;width:35px;height:34px;background:#d04a02;border-radius:17px 0 0 17px;display:flex;align-items:center;padding-left:7px}
.work{display:flex;height:735px;border-bottom:1px solid #aaa}
aside{width:20px;background:#404040;display:flex;flex-direction:column;gap:5px}
.vt{writing-mode:vertical-rl;background:#8c8c8c;color:#fff;font-weight:700;font-size:12px;width:20px;line-height:16px;padding:8px 0 0 0;display:flex;align-items:center;letter-spacing:.05px}
.vt i{width:0;height:0;border-left:3px solid transparent;border-right:3px solid transparent;border-bottom:6px solid #fff;margin:0 4px 11px 0}
.v1{height:71px}.v2{height:92px}
.list{width:1883px;display:flex;flex-direction:column}
.lh{height:41px;background:#e8e8e8;border-top:1px solid #ccc;border-bottom:1px solid #ccc;display:flex;align-items:center;margin-right:-17px;font-size:14px}
.lh>b{padding-bottom:3px}
.ck{width:14px;height:14px;border:1.500px solid #222;border-radius:3px;background:#fff;margin-left:23px;flex:none}
.note{margin:0 28px 0 33px}
.gc{width:65px;height:39px;border:solid #ccc;border-width:0 1px;padding:11px;margin-right:12px}
.fill{width:1561px}
.ate{width:37px;border-right:1px solid #ccc;height:39px;line-height:37px}
.cab{width:60px;height:39px;border-right:1px solid #ccc;padding:9px 11px}
.body{flex:1}
.lr{height:37px;border-bottom:1px solid #d0d0d0;display:flex;align-items:center;font-size:13.200px;letter-spacing:.04px;color:#333}
.last{border:0}
.lr em{margin-left:158px;width:16px;height:16px;border:1.500px solid #e07a1f;color:#d95f02;font:700 8px/13px "Liberation Sans";text-align:center;margin-right:5px;border-radius:1px;margin-top:1px}
.calc{margin:2px 0 0 93px}
.calc+em{margin-left:45px}
.lr .w{border-color:#666c72;padding:2.500px 1px}
.lr .w::before{content:"";display:block;width:11px;height:8px;background:#ffa61a;clip-path:polygon(50% 0,100% 100%,0 100%)}
.hs{height:17px;background:#f1f1f1;padding:5px 6px}
.vs{width:17px;background:#f1f1f1;margin-top:41px;display:flex;flex-direction:column;justify-content:space-between;align-items:center;padding:7px 0 21px}
.foot{height:24px;background:#ebebeb;border-left:1px solid #aaa;display:grid;grid-template-columns:81px 97px 40px 146px 45px;padding-left:1511px;font-size:11.200px}
.foot span{border-left:1px solid #555;padding-left:12px;height:12px;margin-top:4px;line-height:11px}
.foot .l{color:#4a3cf0}
/* toast */
.toast{position:absolute;left:1600px;top:721px;width:308px;height:301px;background:#2f96b4;border-radius:3px;box-shadow:0 0 6px #888;color:#fff;font-size:14px;padding-top:16px}
.toast svg{position:absolute;right:11px;top:17px}
.toast p{margin:0;line-height:18px;text-align:right;padding-right:18px}
.toast p b{font-size:13.700px}
.toast p:nth-of-type(1){padding-right:73px}.toast p:nth-of-type(2){padding-right:61px}.toast p:nth-of-type(4){padding-right:46px}.toast p:nth-of-type(5){padding-right:36px}.toast p:nth-of-type(6){padding-right:43px}.toast p:nth-of-type(7){padding-right:33px}.toast p:nth-of-type(8){padding-right:23px}.toast p:nth-of-type(9){padding-right:30px}.toast p:nth-of-type(10){padding-right:47px}.toast p:nth-of-type(11){padding-right:41px}.toast p:nth-of-type(13){padding-right:40px}
.toast .k{color:#234;font-style:italic;padding:20px 82px 0 0}
.toast .k b{font-size:12px}
/* spreadsheet window */
.excel{position:absolute;left:363px;top:263px;width:1440px;height:759px;border:1px solid #217346;border-top:0;background:#e6e6e6;box-shadow:0 2px 10px rgba(0,0,0,.55);font-family:"Open Sans",sans-serif;font-size:12px;letter-spacing:-.2px;color:#444}
.xtitle{height:35px;background:#217346;color:#fff;display:flex;align-items:center;padding-left:23px}
.as{width:57px}
.sw{width:38px;height:16px;border:1.500px solid #fff;border-radius:8px;display:flex;align-items:center;font-size:10.500px;gap:7px;padding-left:4px}
.sw i{width:8px;height:8px;border-radius:50%;background:#fff}
.qa{margin-left:15px}
.name{margin-left:146px;width:670px;letter-spacing:-.29px}
.user{width:109px}
.vb{width:24px;height:24px;border-radius:50%;background:#0078d4;display:flex;align-items:center;justify-content:center;font-size:11px}
.wc{margin-left:27px}
.xtabs{height:32px;background:#f3f2f1;display:grid;align-items:center;grid-template-columns:52px 64px 61px 60px 101px 82px 56px 68px 55px 88px 57px 100px 78px 165px 28px 118px 76px 99px;padding:0 0 2px 17px;font-size:13px;letter-spacing:-.35px}
.xtabs .on{font-weight:600;color:#333;width:38px;border-bottom:3px solid #217346;height:27px;line-height:23px;letter-spacing:-.3px;margin-top:3px}
.bt{background:#fff;border:1px solid #ddd;border-radius:2px;height:23px;color:#217346;font-weight:600;display:flex;align-items:center;padding-left:7px;gap:4px;letter-spacing:-.3px}
.sh{width:67px}
.ribbon{height:94px;background:#f3f2f1;border-bottom:1px solid #d2d0ce;display:flex}
section{height:88px;margin-top:2px;border-right:1px solid #b3b0ad;display:flex;flex-direction:column;position:relative}
.in{height:75px;display:flex}
.col{flex-direction:column}
h6{margin:0;font:400 11.500px/16px "Open Sans";text-align:center;height:16px;padding-top:3px;color:#444}
h6 svg{position:absolute;right:2px;bottom:-1px}
.cv{width:7px;height:5px;display:inline-block;vertical-align:1px;color:#444}
.big{display:flex;flex-direction:column;align-items:center;line-height:16px;padding-top:4px;width:60px}
.big>svg:first-child{margin-bottom:2px}
.big>.cv{margin-top:5px}
.dis,.dis .cv{color:#aaa}
.hi{background:#c8c6c4;color:#333}
.g1{width:164px}.g1 .big{width:59px}.g1 .in{width:164px}
.g1 h6{padding-right:16px}
.st{display:flex;flex-direction:column}
.st div{height:24px;display:flex;align-items:center;gap:4px}
.g1 .st{margin:-1px 0 0 -7px;letter-spacing:-.3px}
.m9{margin-left:8px}
.g2{width:227px}.g2 .in,.g4 .in{padding-top:8px;gap:9px}
.g2 h6,.g3 h6,.g4 h6{padding-right:16px}
.cb{background:#fff;border:1px solid #c8c6c4;height:23px;display:flex;align-items:center;justify-content:space-between;padding:0 3px;color:#222}
.fr1{display:grid;grid-template-columns:123px 43px 24px 20px;padding-left:9px;align-items:center}
.fr1>svg{margin-left:4px}
.fr2{display:grid;height:23px;align-items:center;grid-template-columns:22px 22px 22px 18px 9px 22px 16px 8px 26px 12px 25px 8px;padding-left:9px;font-size:14px}
.fr2 .hi{height:23px;line-height:22px;text-align:center;font-size:13px}
.fr2 .sr{font-family:"Liberation Serif";font-style:italic;font-size:16px}
.fr2 u{text-align:center;text-decoration-thickness:1px}
s{width:1px;height:20px;background:#ccc;display:block}
.g3{width:274px}
.al{display:grid;grid-template-columns:22px 22px 22px 9px 22px 22px;grid-template-rows:23px 23px;gap:9px 0;padding:8px 0 0 8px;align-content:start;align-items:center;width:132px}
.al span{height:23px;display:flex;align-items:center;justify-content:center}
.al .oc{justify-content:flex-start;padding-left:2px}
.al s{margin-left:3px}
.wm{border-left:1px solid #ccc;height:59px;margin-top:6px;padding:2px 0 0 4px;display:flex;flex-direction:column;gap:9px}
.wm span{height:23px;display:flex;align-items:center;gap:3px;padding-left:3px;letter-spacing:-.3px}
.wm .w{width:81px}.wm .mc{width:130px;padding-left:2px}
.wm .cv{margin-left:8px}
.g4{width:150px}.g4 .cb{width:134px;margin-left:8px}
.nr2{display:grid;height:23px;align-items:center;grid-template-columns:22px 15px 26px 19px 8px 22px 18px;padding-left:11px}
.de{font:8.500px "Open Sans";fill:#333}
.g5{width:194px}.g5 .in{padding-left:11px}.g5 .big:nth-child(1){width:70px}.g5 .big:nth-child(2){width:62px}.g5 .big:nth-child(3){width:40px}
.g6{width:143px}.g6 .in{padding-left:8px}.g6 .big{width:42px}
.g7{width:200px}.g7 .st{padding:0 0 0 11px;width:101px;margin-top:-1px}.g7 .st div{height:23px}.g7 .big{width:45px}
.g8{width:58px}.g8 .big{width:57px}
.up{margin:84px 0 0 9px}
.fbar{height:47px;background:linear-gradient(#d4d4d4,#e6e6e6 8px);display:flex;padding:10px 5px 0;align-items:flex-start}
.nb,.fx,.fi{height:27px;background:#fdfdfd;border:1px solid #c3c3c3;display:flex;align-items:center}
.nb{width:102px;padding:0 6px;justify-content:space-between}
.dots{margin:7px 13px 0 14px}
.fx{width:110px;padding:0 12px;justify-content:space-between}
.fx i{font:italic 700 15px "Liberation Serif";color:#555}.fx sub{font-size:10px;vertical-align:-1px}
.fi{margin-left:3px;width:1183px;justify-content:flex-end;padding-right:4px}
.gridwrap{display:flex;height:501px;border-bottom:1px solid #999;justify-content:space-between}
.sheet{width:1417px;overflow:hidden;background:#fff;border-right:1px solid #aaa}
.cols{height:16px;width:1430px;display:grid;grid-template-columns:26px 10px 16px 122px 16px 16px 98px 16px 16px 54px 16px 16px 54px 16px 16px 54px 16px 16px 54px 16px 16px 39px 16px 16px 54px 16px 16px 54px 16px 16px 60px 16px 16px 54px 16px 16px 123px 16px 16px 81px 16px 16px 100px;font:12.500px/16px "Liberation Sans";text-align:center}
.cols i{background:#d2d2d2;color:#217346;border-right:1px solid #b4b4b4;border-bottom:2px solid #217346;height:16px;display:flex;justify-content:center;letter-spacing:-.5px}
.cols .a,.cols .corner{background:#e6e6e6;color:#222;border-bottom:1px solid #aaa}
.corner::after{content:"";border:5px solid #b4b4b4;border-left-color:transparent;border-top-color:transparent;width:0;height:0;margin:3px -8px 0 0}
.cols .ap{padding-right:15px}
.below{display:flex}
.rows{width:26px;flex:none;display:grid;grid-template-rows:45px 51px 144px repeat(6,18px) repeat(9,15px) 3px;font:13px/13px "Liberation Sans";text-align:center;letter-spacing:-.3px;color:#222}
.rows i{background:#e6e6e6;border-bottom:1px solid #b4b4b4;border-right:1px solid #999;display:flex;align-items:flex-end;justify-content:center;padding-bottom:1px}
.rows i:nth-child(n+4):nth-child(-n+9){padding-bottom:1.500px}
.rows .s{background:#d2d2d2;color:#217346;border-right:2px solid #217346}
.cells{margin-left:9px;position:relative;width:1390px;flex:none;font-family:"DejaVu Serif Condensed","DejaVu Serif",serif}
.title{height:45px;background:#7a1818;color:#fff;font-weight:700;font-size:18.500px;line-height:46px;padding-left:4px;border-left:1px solid #000;border-bottom:1px solid #000;letter-spacing:.55px}
.hd{display:grid;grid-template-columns:155px 130px 86px 86px 86px 86px 71px 86px 86px 92px 86px 155px 113px 120px;grid-template-rows:51px 144px}
.o{background:#dc6900;color:#fff;font-weight:700;font-size:12.500px;line-height:15px;border-right:1px solid #000;display:flex;align-items:flex-end;justify-content:center;text-align:center;padding-bottom:15px;letter-spacing:.13px;border-bottom:1px solid #000}
.n{font-size:12px;line-height:14px;padding-bottom:14px;letter-spacing:.45px}
.r2{grid-row:1/3}
.hd>.r2:first-child{border-left:1px solid #000}
.pot{grid-column:3/13;background:#7a1818;color:#fff;border:solid #000;border-width:0 1px 1px 0;font-weight:700;font-size:12.500px;line-height:15px;display:flex;flex-direction:column;align-items:center;justify-content:center;letter-spacing:.23px;padding-bottom:2px}
.am{grid-column:13}.ao{grid-column:14;letter-spacing:.4px}
.dr{display:grid;grid-template-columns:155px 130px 86px 86px 86px 86px 71px 86px 86px 92px 86px 155px 113px 120px;grid-template-rows:18px;height:18px}
.dr i{background:#c6ad97;border:solid #000;border-width:0 1px 1px 0;display:flex;justify-content:center}
.dr .act{background:#ffdfc3}
.dr i:nth-child(n+3):nth-child(-n+11)::before{content:"";width:12px;height:12px;background:#fff;border:1px solid #f2f2f2;border-top:2px solid #6a6a6a;border-left:2px solid #6a6a6a;margin-top:3px}
.dr i:nth-child(6)::before{transform:translateX(-3px)}
.dr i:nth-child(7)::before{transform:translateX(5px)}
.dr i:nth-child(8)::before{transform:translateX(-2px)}
.gr{height:60px;background:#c6c6c6;padding-top:29px}
.gr div{width:1221px;height:31px;background:#bbb;border:solid #000;border-width:1px 1px 0 0}
.sel{position:absolute;left:0;top:238px;width:1400px;height:171px;border:2px solid #217346;box-shadow:inset 0 0 0 1px #fff}
.xvs{width:15px;margin-right:4px;display:flex;flex-direction:column;background:#d9d9d9;margin-top:2px}
.xvs b,.xhs b{width:15px;height:15px;background:#fff;border:1px solid #aaa;display:flex;align-items:center;justify-content:center}
.xvs u{height:444px;background:#fff;border:1px solid #aaa}
.xvs em{flex:1}
.stabs{height:28px;display:flex;align-items:flex-start;border-bottom:1px solid #c6c6c6}
.stabs a{height:22px;margin-top:3px;padding-bottom:3px;display:flex;align-items:center;justify-content:center;font-size:12.500px;letter-spacing:-.1px}
.ar{width:100px;height:22px;padding:8px 0 0 27px;border-right:1px solid #999;margin-top:4px}
.stabs .lp{width:140px;border-right:1px solid #999;letter-spacing:-.06px;padding-right:2px}
.stabs .or{background:#dc6900;color:#fff}
.stabs .e1{width:114px;margin-left:2px;padding-right:2px}
.stabs .cur{width:131px;margin:-1px 2px 0 2px;height:25px;background:linear-gradient(#fff 20%,#f3c08f);border:solid #fff;border-width:0 2px;box-shadow:0 2px #217346;color:#217346;padding:3px 0 1px}
.cur b{letter-spacing:-.2px}
.e2{width:121px}.e3{width:171px;margin-left:5px}
.plus{margin:5px 0 0 36px}.d2{margin:8px 0 0 19px}
.xhs{margin:6px 0 0 15px;width:540px;height:16px;display:flex;background:#d9d9d9}
.xhs b{height:16px}.xhs u{width:239px;background:#fff;border:1px solid #aaa}.xhs em{flex:1}
.status{height:21px;background:#f3f2f1;display:flex;align-items:center;padding-left:8px;font-size:11px;letter-spacing:-.02px}
.status span{padding-bottom:3px}
.status svg:nth-child(2){margin:0 3px 0 17px}
.views{margin-left:auto;margin-right:-5px}
/* taskbar */
.taskbar{position:absolute;left:0;top:1040px;width:1920px;height:40px;background:#073f4e;display:flex;align-items:center;font-family:"Open Sans",sans-serif;color:#fff}
.taskbar span{width:49px;height:40px;display:flex;align-items:center;justify-content:center}
.taskbar span:nth-child(-n+3){width:48px}
.taskbar span:nth-child(4){margin-left:2px}
.taskbar .run{background:linear-gradient(#a6e9f5,#a6e9f5) 50% 100%/40px 2px no-repeat}
.taskbar .on{background:linear-gradient(#a6e9f5,#a6e9f5) 50% 100%/48px 2px no-repeat #1d778d}
.tray{margin-left:1210px}
.clock{width:76px;text-align:center;font-size:11.500px;line-height:18px;letter-spacing:-.4px}
.notif{margin-left:7px}
```
